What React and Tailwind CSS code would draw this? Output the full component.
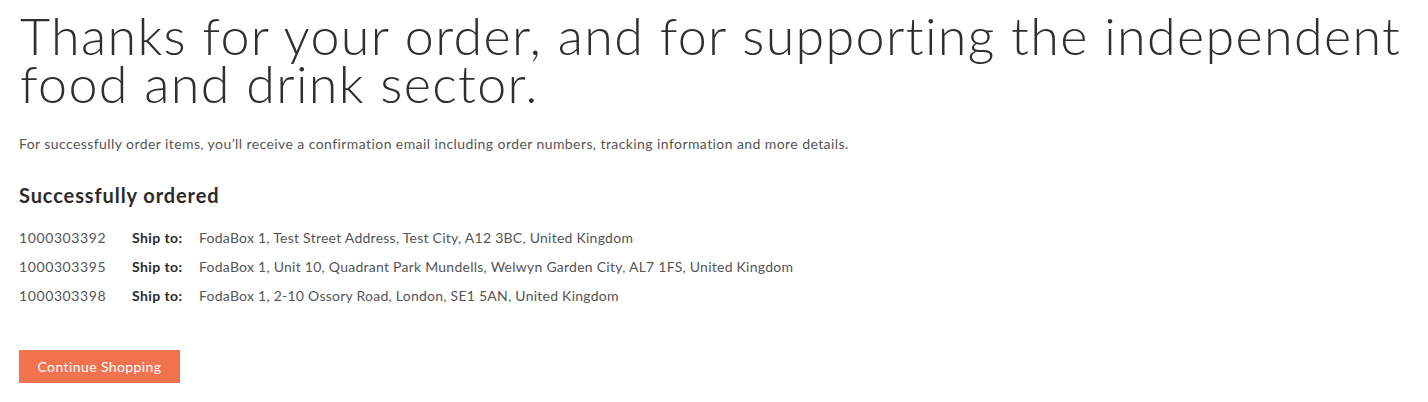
import React from "react";

const orders = [
  { id: "1000303392", address: "FodaBox 1, Test Street Address, Test City, A12 3BC, United Kingdom" },
  { id: "1000303395", address: "FodaBox 1, Unit 10, Quadrant Park Mundells, Welwyn Garden City, AL7 1FS, United Kingdom" },
  { id: "1000303398", address: "FodaBox 1, 2-10 Ossory Road, London, SE1 5AN, United Kingdom" },
];

export default function App() {
  return (
    <div className="min-h-[402px] bg-white px-[19px] pt-[11px] font-['Lato',sans-serif] text-[#333]">
      {/* ------------------ Heading ------------------ */}
      <h1 className="text-[52px] leading-[48px] font-light tracking-[1.35px] text-[#2f2f2f] pl-px">
        Thanks for your order, and for supporting the independent food and drink sector.
      </h1>

      <p className="mt-[27px] text-[14px] leading-[20px] tracking-[0.42px] text-[#555]">
        For successfully order items, you’ll receive a confirmation email including order numbers, tracking information and more details.
      </p>

      <h2 className="mt-[29px] text-[20px] leading-[24px] font-bold tracking-[0.9px] text-[#2b2b2b]">
        Successfully ordered
      </h2>

      {/* ------------------ Orders ------------------ */}
      <div className="mt-[16px] flex flex-col">
        {orders.map((o) => (
          <div key={o.id} className="flex h-[29px] items-center text-[14px] tracking-[0.25px] text-[#555]">
            <span className="w-[113px] shrink-0 tracking-[0.6px]">{o.id}</span>
            <span className="w-[67px] shrink-0 font-bold tracking-[0.4px] text-[#2b2b2b]">Ship to:</span>
            <span>{o.address}</span>
          </div>
        ))}
      </div>

      <button className="mt-[40px] h-[33px] w-[161px] bg-[#f4734f] text-[14px] tracking-[0.4px] text-white">
        Continue Shopping
      </button>
    </div>
  );
}
